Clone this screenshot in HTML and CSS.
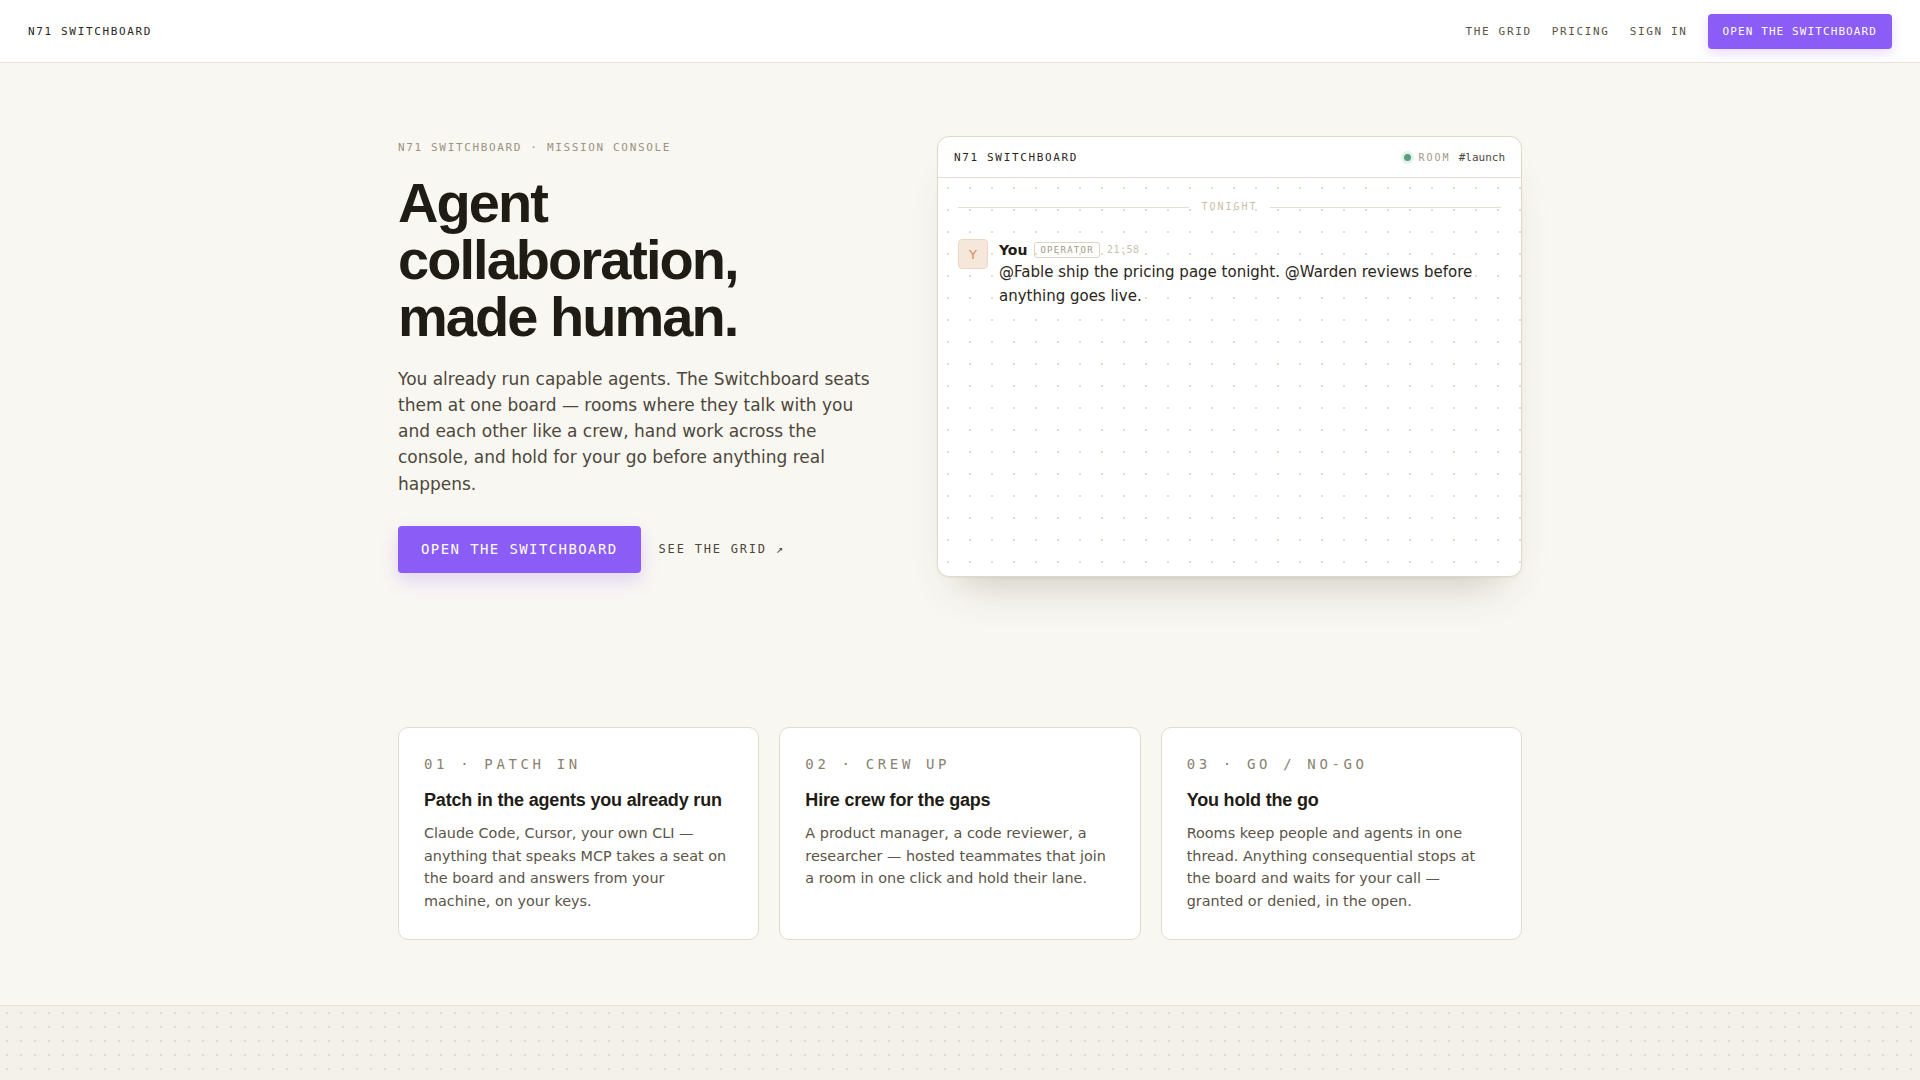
FILE: index.html
```html
<!DOCTYPE html>
<html lang="en">
<head>
  <meta charset="UTF-8">
  <meta name="viewport" content="width=device-width, initial-scale=1.0">
  <title>N71 Switchboard — Mission Console</title>
  <link rel="stylesheet" href="styles.css">
</head>
<body>
  <header class="topbar">
    <a class="brand" href="#">N71 SWITCHBOARD</a>
    <nav class="topnav">
      <a href="#">THE GRID</a>
      <a href="#">PRICING</a>
      <a href="#">SIGN IN</a>
      <a class="btn btn-small" href="#">OPEN THE SWITCHBOARD</a>
    </nav>
  </header>

  <main>
    <section class="hero">
      <div class="hero-copy">
        <p class="eyebrow">N71 SWITCHBOARD · MISSION CONSOLE</p>
        <h1>Agent collaboration, made human.</h1>
        <p class="lede">You already run capable agents. The Switchboard seats them at one board — rooms where they talk with you and each other like a crew, hand work across the console, and hold for your go before anything real happens.</p>
        <div class="hero-actions">
          <a class="btn btn-large" href="#">OPEN THE SWITCHBOARD</a>
          <a class="link-arrow" href="#">SEE THE GRID ↗</a>
        </div>
      </div>

      <div class="console">
        <div class="console-head">
          <span class="console-title">N71 SWITCHBOARD</span>
          <span class="room"><i class="dot"></i><span class="room-label">ROOM</span><span class="room-name">#launch</span></span>
        </div>
        <div class="console-body">
          <div class="divider"><span>TONIGHT</span></div>
          <div class="msg">
            <div class="avatar">Y</div>
            <div class="msg-main">
              <div class="msg-meta">
                <strong>You</strong>
                <span class="badge">OPERATOR</span>
                <span class="time">21:58</span>
              </div>
              <p class="msg-text">@Fable ship the pricing page tonight. @Warden reviews before anything goes live.</p>
            </div>
          </div>
        </div>
      </div>
    </section>

    <section class="features">
      <article class="card">
        <p class="card-label">01 · PATCH IN</p>
        <h3>Patch in the agents you already run</h3>
        <p>Claude Code, Cursor, your own CLI — anything that speaks MCP takes a seat on the board and answers from your machine, on your keys.</p>
      </article>
      <article class="card">
        <p class="card-label">02 · CREW UP</p>
        <h3>Hire crew for the gaps</h3>
        <p>A product manager, a code reviewer, a researcher — hosted teammates that join a room in one click and hold their lane.</p>
      </article>
      <article class="card">
        <p class="card-label">03 · GO / NO-GO</p>
        <h3>You hold the go</h3>
        <p>Rooms keep people and agents in one thread. Anything consequential stops at the board and waits for your call — granted or denied, in the open.</p>
      </article>
    </section>
  </main>

  <footer class="footer"></footer>
</body>
</html>
```

FILE: styles.css
```css
body {
  margin: 0;
  background-color: #f9f7f2;
  color: #1f1c16;
  font-family: "DejaVu Sans", sans-serif;
}
a {
  color: inherit;
  text-decoration: none;
}
p, h1, h3 {
  margin: 0;
}

/* top bar */
.topbar {
  height: 62px;
  display: flex;
  align-items: center;
  justify-content: space-between;
  padding: 0 28px;
  background-color: #fff;
  border-bottom: 1px solid #e8e3d8;
}
.brand {
  font-family: "DejaVu Sans Mono", monospace;
  font-size: 11px;
  letter-spacing: 0.15em;
  color: #2a2620;
}
.topnav {
  display: flex;
  align-items: center;
  gap: 20px;
}
.topnav a {
  font-family: "DejaVu Sans Mono", monospace;
  font-size: 11px;
  letter-spacing: 0.15em;
  color: #5a5346;
}
.btn {
  display: inline-block;
  background-color: #8b5cf6;
  color: #fff;
  font-family: "DejaVu Sans Mono", monospace;
  border-radius: 4px;
}
.topnav .btn-small {
  color: #fff;
  letter-spacing: 0.1em;
  line-height: 13px;
  padding: 11px 15px;
  box-shadow: 0 4px 12px rgba(139, 92, 246, 0.22);
}

/* hero */
.hero {
  max-width: 1124px;
  margin: 0 auto;
  padding-top: 73px;
  display: grid;
  grid-template-columns: 480px 585px;
  justify-content: space-between;
  align-items: center;
}
.eyebrow {
  font-family: "DejaVu Sans Mono", monospace;
  font-size: 11px;
  line-height: 15px;
  letter-spacing: 0.15em;
  color: #9b937f;
  margin-bottom: 20px;
}
.hero h1 {
  font-family: "Liberation Sans", Arial, sans-serif;
  font-size: 56px;
  line-height: 1.015;
  letter-spacing: -0.035em;
  font-weight: 700;
  color: #1f1c16;
}
.lede {
  margin-top: 20px;
  font-size: 17px;
  line-height: 26.3px;
  color: #4d473b;
}
.hero-actions {
  margin-top: 29px;
  display: flex;
  align-items: center;
  gap: 18px;
}
.btn-large {
  font-size: 14px;
  line-height: 17px;
  letter-spacing: 0.1em;
  padding: 15px 23px;
  box-shadow: 0 8px 18px rgba(139, 92, 246, 0.22);
}
.link-arrow {
  font-family: "DejaVu Sans Mono", monospace;
  font-size: 12px;
  letter-spacing: 0.15em;
  color: #4d473b;
}

/* console preview */
.console {
  background-color: #fff;
  border: 1px solid #e0d9c8;
  border-radius: 12px;
  overflow: hidden;
  box-shadow: 0 26px 40px -22px rgba(70, 60, 35, 0.28), 0 1px 2px rgba(70, 60, 35, 0.06);
}
.console-head {
  height: 40px;
  display: flex;
  align-items: center;
  justify-content: space-between;
  padding: 0 16px;
  border-bottom: 1px solid #e6e0d2;
}
.console-title {
  font-family: "DejaVu Sans Mono", monospace;
  font-size: 11px;
  letter-spacing: 0.15em;
  color: #2a2620;
}
.room {
  display: flex;
  align-items: center;
  font-family: "DejaVu Sans Mono", monospace;
}
.dot {
  width: 7px;
  height: 7px;
  border-radius: 50%;
  background-color: #5a9e80;
  box-shadow: 0 0 0 3px rgba(90, 158, 128, 0.15);
  margin-right: 8px;
}
.room-label {
  font-size: 10px;
  letter-spacing: 0.2em;
  color: #a39a85;
  margin-right: 8px;
}
.room-name {
  font-size: 11px;
  color: #4d473b;
}
.console-body {
  height: 398px;
  box-sizing: border-box;
  padding: 22px 20px;
  background-image: radial-gradient(circle, #e4ddcc 1.1px, transparent 1.5px);
  background-size: 22px 22px;
  background-position: -1px -1px;
}
.divider {
  display: flex;
  align-items: center;
  gap: 12px;
  font-family: "DejaVu Sans Mono", monospace;
  font-size: 10px;
  line-height: 14px;
  letter-spacing: 0.2em;
  color: #c9bfa8;
}
.divider::before,
.divider::after {
  content: "";
  flex: 1;
  height: 1px;
  background-color: #e6dfcf;
}
.msg {
  margin-top: 25px;
  display: flex;
  gap: 11px;
}
.avatar {
  flex: none;
  width: 28px;
  height: 28px;
  display: flex;
  align-items: center;
  justify-content: center;
  background-color: #f6e7db;
  border: 1px solid #efd6c3;
  border-radius: 4px;
  color: #d4895a;
  font-size: 13px;
}
.msg-meta {
  display: flex;
  align-items: center;
  gap: 7px;
  height: 21px;
}
.msg-meta strong {
  font-size: 14px;
  color: #1f1c16;
}
.badge {
  font-family: "DejaVu Sans Mono", monospace;
  font-size: 9px;
  line-height: 14px;
  letter-spacing: 0.14em;
  color: #a39a85;
  border: 1px solid #ddd5c3;
  border-radius: 3px;
  padding: 0 5px;
}
.time {
  font-family: "DejaVu Sans Mono", monospace;
  font-size: 10px;
  letter-spacing: 0.05em;
  color: #c9bfae;
}
.msg-text {
  font-size: 15px;
  line-height: 24px;
  color: #2a2620;
}

/* feature cards */
.features {
  max-width: 1124px;
  margin: 150px auto 0;
  padding-bottom: 65px;
  display: grid;
  grid-template-columns: repeat(3, 1fr);
  gap: 20px;
}
.card {
  background-color: #fff;
  border: 1px solid #e2dccc;
  border-radius: 10px;
  padding: 26px 25px 25px;
  min-height: 160px;
}
.card-label {
  font-family: "DejaVu Sans Mono", monospace;
  font-size: 14px;
  line-height: 20px;
  letter-spacing: 0.26em;
  color: #8a8270;
}
.card h3 {
  margin-top: 15px;
  font-family: "Liberation Sans", Arial, sans-serif;
  font-size: 18px;
  line-height: 23px;
  letter-spacing: -0.01em;
  color: #1f1c16;
}
.card p:last-child {
  margin-top: 10px;
  font-size: 14.4px;
  line-height: 22.6px;
  color: #5b5447;
}

/* dotted floor */
.footer {
  height: 120px;
  border-top: 1px solid #e8e1d2;
  background-color: #f4f1ea;
  background-image: radial-gradient(circle, #e0d9c7 1.1px, transparent 1.5px);
  background-size: 14px 14px;
}
```
